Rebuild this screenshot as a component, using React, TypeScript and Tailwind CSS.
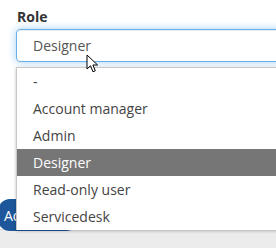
const roles = ["-", "Account manager", "Admin", "Designer", "Read-only user", "Servicedesk"];

function Cursor() {
  return (
    <svg width="14" height="20" viewBox="0 0 14 20" className="absolute left-[86px] top-[54px] z-20">
      <path d="M1 1 L1 15 L4.5 11.8 L7 17.8 L9.3 16.8 L6.9 11 L11.6 11 Z" fill="#fff" stroke="#000" strokeWidth="1" strokeLinejoin="round" />
    </svg>
  );
}

export default function App() {
  return (
    <div className="relative w-[276px] h-[248px] overflow-hidden bg-[#ececec] font-['Open_Sans',sans-serif]">
      <div className="flex flex-col h-[230px] bg-white border-b border-[#d4d4d4] pt-[7px] pl-[16px]">
        <label className="text-[14px] font-bold leading-[20px] text-[#333] pl-[1px]">Role</label>
        <div className="mt-[2px] h-[33px] w-[290px] rounded-[4px] border border-[#66afe9] shadow-[inset_0_1px_1px_rgba(0,0,0,0.075),0_0_8px_rgba(102,175,233,0.6)] flex items-center pl-[16px] text-[14px] text-[#555]">
          Designer
        </div>
        <button className="mt-auto mb-[-2px] ml-[-18px] w-[80px] h-[32px] rounded-[12px] bg-[#1d569a] text-white text-[14px] text-left pl-[6px]">
          Add
        </button>
      </div>

      <div className="absolute left-[16px] top-[67px] w-[280px] bg-white border-t border-l border-[#c9c9c9] shadow-[0_1px_3px_rgba(0,0,0,0.25)] z-10">
        {roles.map((r) => (
          <div
            key={r}
            className={
              r === "Designer"
                ? "h-[27px] flex items-center pl-[16px] text-[14px] bg-[#767676] text-white"
                : "h-[27px] flex items-center pl-[16px] text-[14px] text-[#444]"
            }
          >
            {r}
          </div>
        ))}
      </div>

      <Cursor />
    </div>
  );
}
